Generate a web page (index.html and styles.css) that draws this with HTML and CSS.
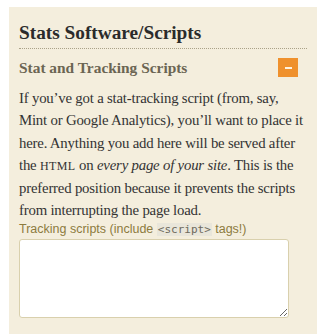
FILE: index.html
```html
<!DOCTYPE html>
<html lang="en">
<head>
    <meta charset="UTF-8">
    <title>Stats Software/Scripts</title>
    <link rel="stylesheet" href="styles.css">
</head>
<body>
    <div class="panel">
        <h2>Stats Software/Scripts</h2>

        <div class="section-head">
            <h3>Stat and Tracking Scripts</h3>
            <button class="toggle" type="button" aria-label="Collapse"><span class="bar"></span></button>
        </div>

        <p class="desc">
            If you&rsquo;ve got a stat-tracking script (from, say, Mint or Google Analytics),
            you&rsquo;ll want to place it here. Anything you add here will be served after
            the <span class="caps">HTML</span> on <em>every page of your site</em>. This is the
            preferred position because it prevents the scripts from interrupting the page load.
        </p>

        <label for="tracking" class="field-label">Tracking scripts (include <code>&lt;script&gt;</code> tags!)</label>
        <textarea id="tracking" class="field"></textarea>
    </div>
</body>
</html>
```

FILE: styles.css
```css
html, body {
    margin: 0;
    padding: 0;
    background-color: #ffffff;
}
body {
    padding: 7px 0 0 9px;
    height: 334px;
    box-sizing: border-box;
    overflow: hidden;
}
.panel {
    background-color: #f4eedd;
    height: 100%;
    padding: 15px 10px 0 10px;
    box-sizing: border-box;
    font-family: "Liberation Serif", "Times New Roman", serif;
    color: #333333;
}
h2 {
    margin: 0;
    font-size: 19.3px;
    font-weight: bold;
    color: #2b2b2b;
    line-height: 22px;
    padding-bottom: 4px;
    border-bottom: 1px dotted #aaa288;
}
.section-head {
    display: flex;
    align-items: center;
    justify-content: space-between;
    margin-top: 9px;
    padding-right: 9px;
}
h3 {
    margin: 0;
    font-size: 15.4px;
    font-weight: bold;
    color: #6b6553;
}
.toggle {
    display: flex;
    align-items: center;
    justify-content: center;
    width: 20px;
    height: 19px;
    border: none;
    padding: 0;
    background-color: #ef912d;
    cursor: pointer;
}
.bar {
    width: 7px;
    height: 2px;
    background-color: #fff3e0;
}
.desc {
    margin: 10px 0 0 0;
    font-size: 14.8px;
    letter-spacing: -0.2px;
    line-height: 22.3px;
}
.caps {
    font-size: 12px;
    letter-spacing: 0.4px;
}
.field-label {
    display: block;
    margin-top: 0;
    font-family: "Liberation Sans", Arial, sans-serif;
    font-size: 12.5px;
    color: #8c7b3e;
}
code {
    font-family: "DejaVu Sans Mono", monospace;
    font-size: 11px;
    background-color: #e9e6da;
    color: #6e6a5c;
    padding: 0 1px;
}
.field {
    display: block;
    margin-top: 3px;
    width: 270px;
    height: 79px;
    box-sizing: border-box;
    background-color: #ffffff;
    border: 1px solid #d9d0ad;
    border-radius: 3px;
}
```
